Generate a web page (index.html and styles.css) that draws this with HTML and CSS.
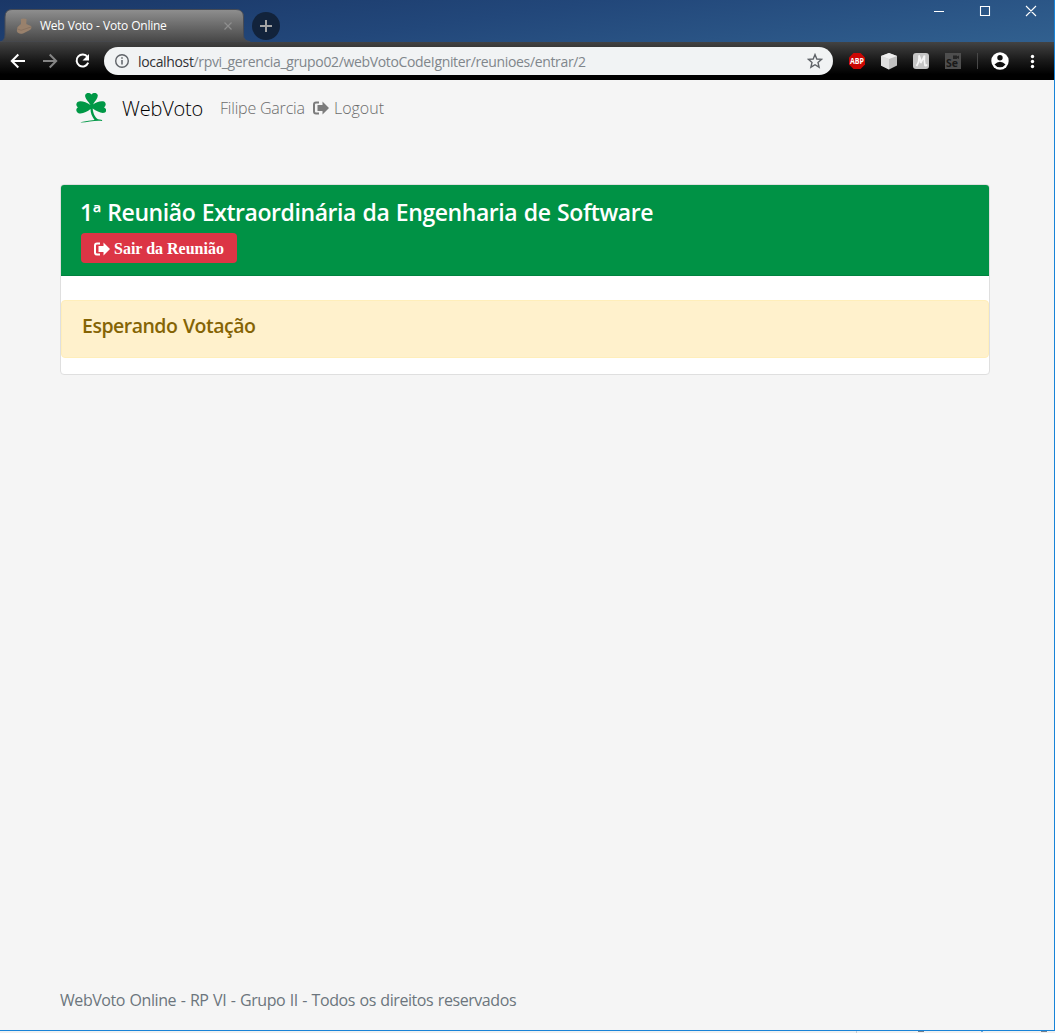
FILE: index.html
```html
<!DOCTYPE html>
<html lang="pt-BR">
<head>
<meta charset="utf-8">
<title>Web Voto - Voto Online</title>
<link rel="stylesheet" href="styles.css">
</head>
<body>
<div class="window">
  <header class="tabstrip">
    <div class="tab">
      <svg class="tab-shape" width="252" height="33" viewBox="0 0 252 33">
        <defs><linearGradient id="tabfill" x1="0" y1="0" x2="0" y2="1"><stop offset="0" stop-color="#8f8f8f"/><stop offset="1" stop-color="#464646"/></linearGradient></defs>
        <path d="M0 33Q5 32 5 26V8Q5 .5 12 .5H236Q243.500 .5 243.500 8V26Q243.500 32 250 32.500V33Z" fill="url(#tabfill)" stroke="#464b55" stroke-width="1"/>
      </svg>
      <svg class="favicon" width="16" height="16" viewBox="0 0 16 16"><path d="M5 1Q7.500-.2 10.500 1L10.300 6 15 8Q16.500 11 13 12.500L7 15.500Q2 16.500.8 13L1.500 9 5 6Z" fill="#99816c"/><path d="M1.500 11Q5 13.500 9 11L15 9" fill="none" stroke="#8a7361" stroke-width="1"/></svg>
      <span class="tab-title"><span class="t-tab">Web Voto - Voto Online</span></span>
      <svg class="tab-close" width="8" height="8" viewBox="0 0 8 8"><path d="M.5.5 7.500 7.500M7.500.5.5 7.500" stroke="#8e8e8e" stroke-width="1.200"/></svg>
    </div>
    <svg class="new-tab" width="28" height="28" viewBox="0 0 28 28"><circle cx="14" cy="14" r="14" fill="#12233b"/><path d="M14 8V20M8 14H20" stroke="#a4a4a4" stroke-width="2"/></svg>
    <svg class="controls" width="104" height="12" viewBox="0 0 104 12"><path d="M0 6.500H10M46.500 1.500H55.500V10.500H46.500ZM92 1 102 11M102 1 92 11" fill="none" stroke="#fff" stroke-width="1.100"/></svg>
  </header>
  <div class="toolbar">
    <svg class="nav-icons" width="104" height="38" viewBox="0 0 104 38" fill="none" stroke-width="2">
      <path d="M25 19H12M18.300 12.500 11.800 19 18.300 25.500" stroke="#fff"/>
      <path d="M43 19H56M49.700 12.500 56.200 19 49.700 25.500" stroke="#858585"/>
      <path d="M87.500 15A6 6 0 1 0 88.200 20.700" stroke="#fff"/><path d="M89 12V18.500H82.500Z" fill="#fff"/>
    </svg>
    <div class="address">
      <svg width="16" height="16" viewBox="0 0 16 16"><circle cx="8" cy="8" r="6.300" fill="none" stroke="#5f6368" stroke-width="1.400"/><path d="M8 7V11.500M8 4.300V5.800" stroke="#5f6368" stroke-width="1.500"/></svg>
      <span class="url"><span class="host">localhost</span><span class="path">/rpvi_gerencia_grupo02/webVotoCodeIgniter/reunioes/entrar/2</span></span>
      <svg width="16" height="16" viewBox="0 0 16 16"><path d="M8 1.600 9.800 6 14.600 6.400 11 9.500 12.100 14.200 8 11.700 3.900 14.200 5 9.500 1.400 6.400 6.200 6Z" fill="none" stroke="#5f6368" stroke-width="1.400"/></svg>
    </div>
    <svg class="extensions" width="206" height="38" viewBox="0 0 206 38">
      <path d="M12.500 11H19.500L24 15.500V22.500L19.500 27H12.500L8 22.500V15.500Z" fill="#cb0704"/>
      <text x="16" y="22.200" class="abp" text-anchor="middle" textLength="14" lengthAdjust="spacingAndGlyphs">ABP</text>
      <path d="M48 11 56 14V23.500L48 27.500 40 23.500V14Z" fill="#c0c0c0"/><path d="M40 14 48 17V27.500L40 23.500Z" fill="#dedede"/><path d="M48 11 56 14 48 17 40 14Z" fill="#eee"/>
      <rect x="72" y="11" width="16" height="16" rx="3" fill="#c4c4c4"/><path d="M75.500 24Q78.500 20 78 13.500Q80 17 79.700 21Q81.500 18 83.500 13.500Q83 19 84 23.500Q85 24 86 22.500" fill="none" stroke="#f4f4f4" stroke-width="1.700"/>
      <rect x="104" y="11" width="16" height="16" fill="#4e4e4e"/><text x="105" y="25" class="se">Se</text><path d="M112 13.500H116V14.500L118 13.500V17L116 16V17H112Z" fill="#252525"/>
      <path d="M136.500 11V27" stroke="#484848"/>
      <circle cx="159" cy="19" r="8.700" fill="#fff"/><circle cx="159" cy="15.800" r="2.700" fill="#101010"/><path d="M153.500 22.500Q156 19.800 159 19.800T164.500 22.500Q162.500 25.300 159 25.300T153.500 22.500Z" fill="#101010"/>
      <circle cx="191.500" cy="14.500" r="1.700" fill="#fff"/><circle cx="191.500" cy="19.500" r="1.700" fill="#fff"/><circle cx="191.500" cy="24.500" r="1.700" fill="#fff"/>
    </svg>
  </div>
  <nav class="navbar">
    <svg width="30" height="30" viewBox="0 0 30 30" fill="#009846">
      <path d="M14.500 12C12 8 8.500 5 9.200 2C10.500-.5 13.500-.5 15.400 1.500C17.500-.5 20.500-.5 21.700 2C22.400 5 19 8 17 11.500C20 9.500 25 7.300 28.500 8.800C30.500 10.500 29.800 13 28 14.200C30.500 15.500 31 18 29 19.500C26 21 21 18.500 16.700 15.500C17 20 19 24.500 22 26.300C25 26.500 26.800 27.200 26 28C18 27.300 11 29.700 4.500 29.500Q5 28.500 18.500 27C16 23.500 14.500 20 14.500 16C11 19 5.500 21.500 2 19.900C-.5 18.200 0 15.500 2 14.200C-.3 13 0 10.200 1.600 8.900C5 7.300 10.500 9.500 14.500 12Z"/>
    </svg>
    <span class="brand">WebVoto</span>
    <span class="user">Filipe Garcia</span>
    <svg class="exit" width="16" height="14" viewBox="0 0 16 14"><path d="M6 1.500H3Q1 1.500 1 3.500V10.500Q1 12.500 3 12.500H6" fill="none" stroke="currentColor" stroke-width="2"/><path d="M9.500.5 16 7 9.500 13.500V10H4.500V4H9.500Z" fill="currentColor"/></svg>
    <span class="logout">Logout</span>
  </nav>
  <main class="card">
    <div class="card-header">
      <h4 class="title"><span class="t-title">1ª Reunião Extraordinária da Engenharia de Software</span></h4>
      <button class="leave"><svg width="16" height="14" viewBox="0 0 16 14"><path d="M6 1.500H3Q1 1.500 1 3.500V10.500Q1 12.500 3 12.500H6" fill="none" stroke="currentColor" stroke-width="2"/><path d="M9.500.5 16 7 9.500 13.500V10H4.500V4H9.500Z" fill="currentColor"/></svg><span>Sair da Reunião</span></button>
    </div>
    <div class="alert"><span class="t-alert">Esperando Votação</span></div>
  </main>
  <footer class="footer"><span class="t-foot">WebVoto Online - RP VI - Grupo II - Todos os direitos reservados</span></footer>
</div>
<div class="edge"><i class="e1"></i><i class="e2"></i><i class="e3"></i><i class="e4"></i></div>
</body>
</html>
```
FILE: styles.css
```css
* { box-sizing: border-box; }
body { margin: 0; width: 1055px; height: 1033px; overflow: hidden; background: #f0f0f0; font-family: "Open Sans", "Noto Sans", sans-serif; white-space: nowrap; }
svg { display: block; flex: none; }
.window { display: flex; flex-direction: column; height: 1031px; border-right: 1px solid #1883d7; border-bottom: 1px solid #1883d7; background: #f5f5f5; }
.tabstrip { display: flex; height: 42px; flex: none; background: linear-gradient(172deg, #1a3767 0%, #22477a 45%, #31608f 100%); }
.tab { position: relative; display: flex; align-items: center; width: 252px; height: 33px; margin-top: 9px; padding-left: 16px; }
.tab-shape { position: absolute; left: 0; top: 0; }
.favicon, .tab-title, .tab-close { position: relative; }
.tab-title { width: 183px; margin-left: 8px; color: #fff; font-size: 12px; }
.t-tab { letter-spacing: -.27px; word-spacing: .6px; }
.tab-close { margin-left: 1px; }
.new-tab { margin-top: 12px; }
.controls { margin: 5px 16px 0 auto; }
.toolbar { display: flex; align-items: center; height: 38px; flex: none; background: linear-gradient(#434343, #1c1c1c 45%, #000 85%); }
.address { display: flex; align-items: center; width: 729px; height: 28px; padding: 0 10px; border-radius: 14px; background: #f1f3f4; }
.url { flex: 1; padding-left: 8px; font-size: 14px; color: #80868b; letter-spacing: -.345px; }
.host { color: #303134; }
.extensions { margin-left: 8px; }
.abp { font: bold 8px "Open Sans", sans-serif; fill: #fff; }
.se { font: bold 10.5px "Open Sans", sans-serif; fill: #191919; }
.navbar { display: flex; align-items: center; height: 56px; flex: none; padding-left: 76px; color: #6c6c6c; font-size: 16px; font-weight: 300; }
.brand { width: 81px; margin: 0 17px 0 16px; color: #000; font-size: 20px; letter-spacing: -.18px; }
.user { width: 85px; margin-right: 8px; letter-spacing: -.2px; }
.exit { margin-right: 5px; color: #7c7c7c; }
.logout { letter-spacing: -.02px; }
.card { width: 930px; height: 191px; margin: 48px 0 0 60px; flex: none; border: 1px solid #dfdfdf; border-radius: 4px; background: #fff; }
.card-header { height: 91px; padding: 13px 20px 12px; border-bottom: 1px solid #00823f; border-radius: 3px 3px 0 0; background: #009245; }
.title { margin: 0 0 6px -1px; color: #fff; font-size: 23px; font-weight: 600; line-height: 29px; }
.t-title { letter-spacing: -.43px; word-spacing: 1px; }
.leave { display: flex; align-items: center; gap: 4px; width: 156px; height: 30px; padding: 1px 0 0 13px; border: 0; border-radius: 4px; background: #dc3545; color: #fff; font: bold 16px "Liberation Serif", serif; white-space: nowrap; }
.alert { height: 58px; margin-top: 24px; padding: 13px 20px; border: 1px solid #ffeeba; border-radius: 4px; background: #fff1cc; color: #856404; font-size: 19.5px; font-weight: 600; line-height: 24px; }
.t-alert { letter-spacing: -.5px; word-spacing: 1px; }
.footer { margin: auto 0 18px 60px; color: #6c757d; font-size: 16px; line-height: 24px; }
.t-foot { letter-spacing: -.43px; word-spacing: .8px; }
.edge { display: flex; height: 2px; }
.edge i { height: 1px; }
.edge .e1 { width: 1px; height: 2px; margin-left: 856px; background: #c6cdd3; }
.e2 { width: 6px; margin-left: 61px; background: #77818e; }
.e3 { width: 2px; margin-left: 57px; background: #6aa9df; }
.e4 { width: 6px; margin-left: 58px; background: #77818e; }
```
